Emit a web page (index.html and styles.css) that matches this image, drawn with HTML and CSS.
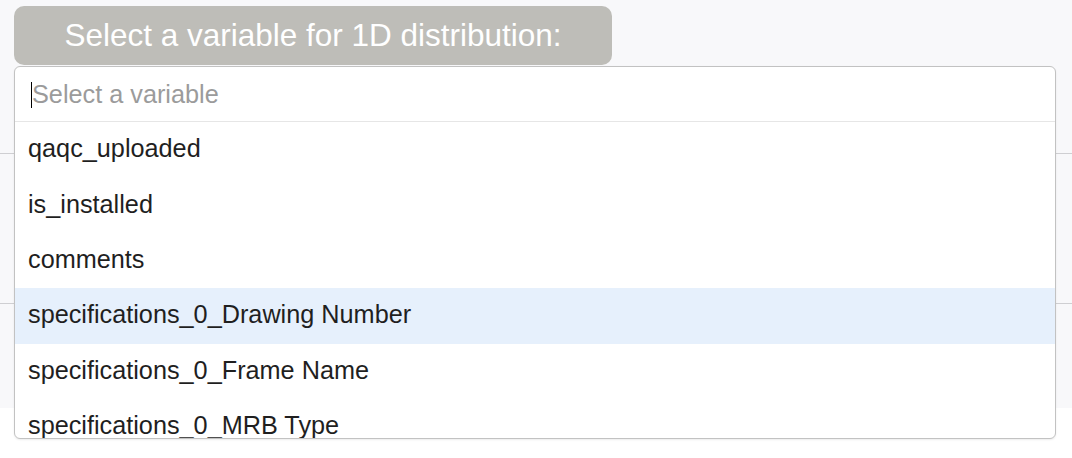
FILE: index.html
```html
<!DOCTYPE html>
<html lang="en">
<head>
<meta charset="utf-8">
<title>1D distribution</title>
<link rel="stylesheet" href="styles.css">
</head>
<body>
<div class="page">
  <div class="panel">
    <div class="header">
      <div class="title-btn">Select a variable for 1D distribution:</div>
    </div>
    <div class="section s1"></div>
    <div class="section s2"></div>
    <div class="section s3"></div>

    <div class="dropdown">
      <div class="search">
        <span class="caret"></span><span class="placeholder">Select a variable</span>
      </div>
      <ul class="options">
        <li class="option">qaqc_uploaded</li>
        <li class="option">is_installed</li>
        <li class="option">comments</li>
        <li class="option active">specifications_0_Drawing Number</li>
        <li class="option">specifications_0_Frame Name</li>
        <li class="option">specifications_0_MRB Type</li>
      </ul>
    </div>
  </div>
</div>
</body>
</html>
```

FILE: styles.css
```css
* { box-sizing: border-box; }

html, body {
  margin: 0;
  padding: 0;
  background: #ffffff;
  font-family: "Liberation Sans", Arial, Helvetica, sans-serif;
}

.page {
  width: 1072px;
  height: 458px;
  overflow: hidden;
}

.panel {
  position: relative;
  width: 1072px;
  height: 408px;
  background: #f8f8fa;
  display: flex;
  flex-direction: column;
}

.header {
  padding: 6px 14px 0 14px;
  height: 66px;
  display: flex;
}

.title-btn {
  width: 598px;
  height: 59px;
  background: #bebdb8;
  border-radius: 10px;
  color: #ffffff;
  font-size: 31.5px;
  display: flex;
  align-items: center;
  justify-content: center;
  padding-bottom: 1px;
}

.section { flex: none; }
.s1 { height: 88px; border-bottom: 1px solid #cfcfd2; }
.s2 { height: 150px; border-bottom: 1px solid #cfcfd2; }
.s3 { flex: 1; }

.dropdown {
  position: absolute;
  z-index: 5;
  left: 14px;
  top: 66px;
  width: 1042px;
  height: 373px;
  background: #ffffff;
  border: 1px solid #c2c2c2;
  border-radius: 6px;
  box-shadow: 0 1px 2px rgba(0, 0, 0, 0.08);
  display: flex;
  flex-direction: column;
  overflow: hidden;
}

.search {
  height: 55px;
  flex: none;
  border-bottom: 1px solid #e6e6e6;
  display: flex;
  align-items: center;
  padding-left: 16px;
  font-size: 25.25px;
}

.caret {
  display: inline-block;
  width: 1px;
  height: 26px;
  background: #000;
  margin-top: 1px;
}

.placeholder {
  color: #9b9b9b;
}

.options {
  list-style: none;
  margin: 0;
  padding: 0;
  flex: 1;
  overflow: hidden;
}

.option {
  height: 55.4px;
  display: flex;
  align-items: center;
  padding-left: 13px;
  padding-bottom: 2px;
  font-size: 25.25px;
  color: #1f1f1f;
  white-space: nowrap;
}

.option.active {
  background: #e6f0fc;
}
```
